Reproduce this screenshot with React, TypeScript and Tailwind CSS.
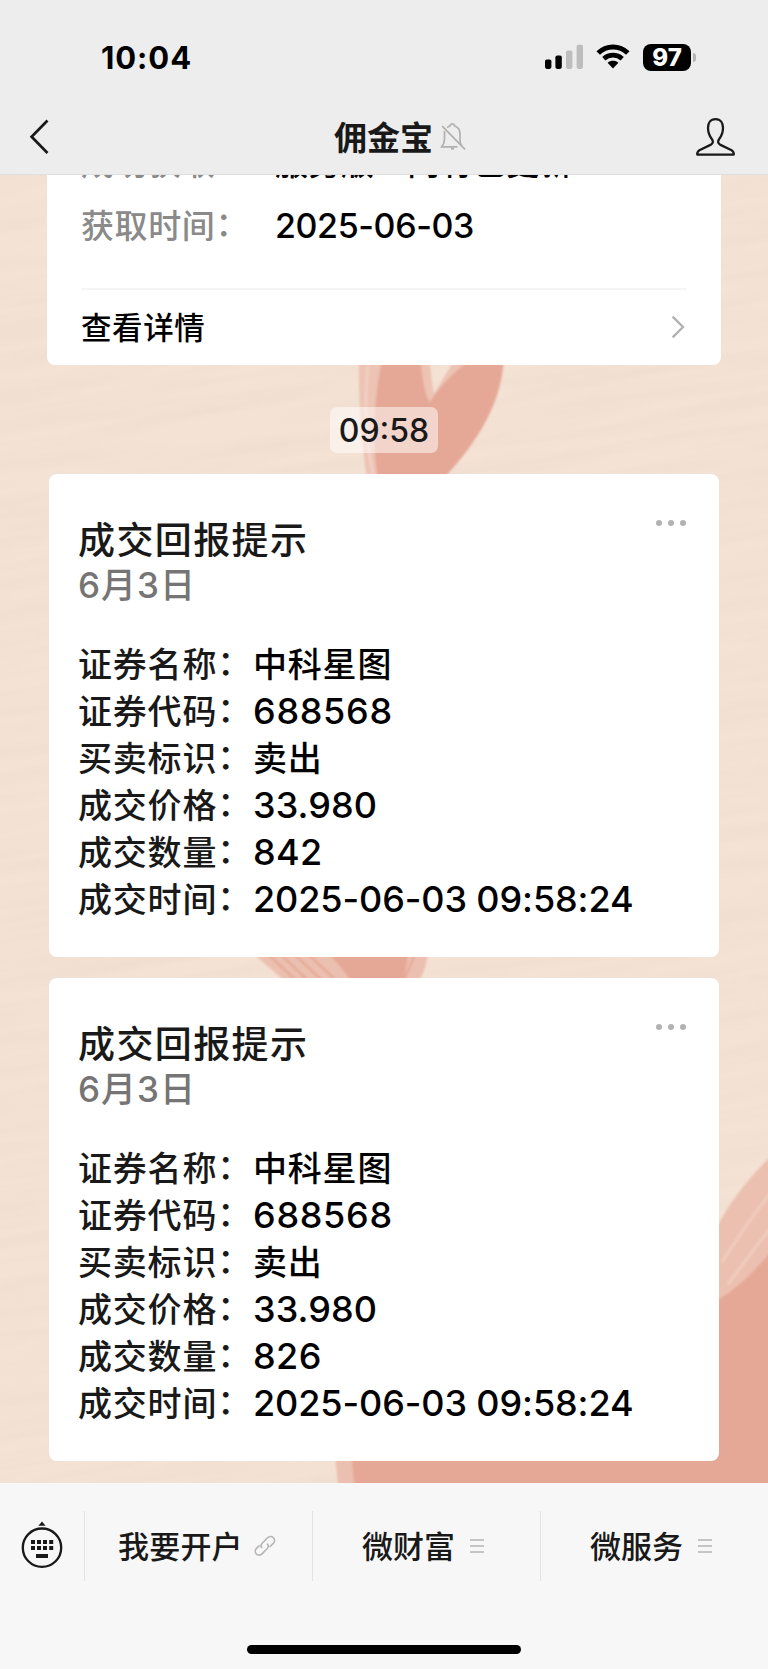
import React from "react";

const CJK = "font-['Inter','Noto_Sans_CJK_SC',sans-serif]";

function Backdrop() {
  return (
    <svg className="absolute inset-0" width="768" height="1669" viewBox="0 0 768 1669" aria-hidden="true">
      <defs>
        <filter id="grain" x="0" y="0" width="100%" height="100%">
          <feTurbulence type="fractalNoise" baseFrequency="0.005 0.07" numOctaves="3" seed="7" />
          <feColorMatrix values="0 0 0 0 0.81  0 0 0 0 0.70  0 0 0 0 0.61  1.3 0 0 0 -0.45" />
        </filter>
        <filter id="soft" x="-10%" y="-10%" width="120%" height="120%">
          <feGaussianBlur stdDeviation="1.3" />
        </filter>
      </defs>
      <rect width="768" height="1669" fill="#f4e2d4" />
      <g transform="rotate(-9 384 834)">
        <rect x="-200" y="-100" width="1200" height="1900" filter="url(#grain)" opacity="0.55" />
      </g>
      <g filter="url(#soft)">
        <path d="M359 340 C358 385 360 430 367 480 L442 480 C480 440 502 400 504 340 L462 340 C455 362 442 380 434 394 C431 380 430 360 428 340 Z" fill="#edc3b3" />
        <path d="M388 340 C376 375 370 430 378 480 L442 480 C480 440 503 400 504 355 L484 352 C458 366 440 385 430 402 C424 395 421 370 419 340 Z" fill="#e5a896" />
        <path d="M368 366 C364 400 366 440 373 474" stroke="#f2d0c4" strokeWidth="3" fill="none" />
        <path d="M250 950 C265 965 278 975 296 990 L412 990 C424 975 428 965 428 945 Z" fill="#ecc0b0" />
        <path d="M320 945 C335 960 346 972 356 990 L402 990 L410 945 Z" fill="#e5a896" />
        <path d="M266 952 L306 990 M278 952 L318 990 M292 952 L332 990 M306 952 L346 990 M416 952 L402 985" stroke="#e5ab9a" strokeWidth="2.5" fill="none" />
        <path d="M780 1148 C735 1188 716 1225 700 1262 L334 1400 C333 1440 336 1470 340 1500 L790 1500 L790 1148 Z" fill="#ecc0b0" />
        <path d="M790 1225 C765 1262 740 1290 700 1310 L350 1400 C350 1440 352 1470 356 1500 L790 1500 Z" fill="#e5a896" />
        <path d="M722 1262 C740 1235 752 1215 772 1192 M728 1284 C748 1258 760 1240 776 1222" stroke="#f0cdbf" strokeWidth="3" fill="none" />
      </g>
    </svg>
  );
}

function StatusBar() {
  return (
    <div className="flex h-[100px] items-center pt-[14px] pl-[101px] text-black">
      <span className="w-[444px] text-[31px] leading-none font-bold tracking-[0.9px]">10:04</span>
      <svg width="38" height="26" viewBox="0 0 38 26">
        <rect x="0" y="15.5" width="6.4" height="9.4" rx="1.8" />
        <rect x="10.4" y="11.5" width="6.4" height="13.4" rx="1.8" />
        <rect x="21" y="6.5" width="6.4" height="18.4" rx="1.8" fill="#bdbdbd" />
        <rect x="31.6" y="0.8" width="6.4" height="24.1" rx="1.8" fill="#bdbdbd" />
      </svg>
      <svg className="ml-[13px]" width="34" height="26" viewBox="0 0 34 26">
        <path d="M2.2 9 C10.5 0.9 23.5 0.9 31.8 9" fill="none" stroke="#000" strokeWidth="5" />
        <path d="M7.8 14.7 C13 9.9 21 9.9 26.2 14.7" fill="none" stroke="#000" strokeWidth="4.6" />
        <path d="M11.6 18.8 C14.8 16.2 19.2 16.2 22.4 18.8 L17 24.6 Z" />
      </svg>
      <div className="ml-[13px] flex h-[27px] w-[48px] items-center justify-center rounded-[8px] bg-black pt-[1px] text-[24px] leading-none font-extrabold text-white">
        97
      </div>
      <span className="ml-[2px] h-[9px] w-[3px] rounded-r-[3px] bg-[#b5b5b5]" />
    </div>
  );
}

function NavBar() {
  return (
    <div className="flex h-[74px] items-center text-[#191919]">
      <svg className="ml-[28px]" width="24" height="40" viewBox="0 0 24 40">
        <path d="M19.5 3.5 L3.6 19.7 L19.5 36" fill="none" stroke="currentColor" strokeWidth="2.7" />
      </svg>
      <div className="ml-[282px] flex w-[362px] items-center">
        <h1 className="pt-[2px] text-[33px] leading-[40px] font-bold">佣金宝</h1>
        <svg className="ml-[6px]" width="28" height="30" viewBox="0 0 28 30" fill="none" stroke="#b0b0b0" strokeWidth="1.7">
          <path d="M5.5 9 V17 C5.5 21 4.5 22.5 2.8 24.8 H18.5 M8.2 5.6 C9.3 4.6 10 4.3 11 4 C11.6 1.2 15 1.2 15.6 4 C19 5 21 8 21 12 V18.5 C21 21 21.5 22.3 22.8 24" />
          <path d="M3.2 4.2 L26 27.4" />
          <path d="M12 26.6 H15" strokeWidth="2" />
        </svg>
      </div>
      <svg width="40" height="40" viewBox="0 0 40 40" fill="none" stroke="currentColor" strokeWidth="2.3" strokeLinejoin="round">
        <path d="M19.5 2.2 C14.4 2.2 12 6 12 10.8 C12 15.8 13 18.4 15.8 22 C17.5 24.2 17.2 26.4 15 27.6 L3.4 33.2 C1.6 34.2 1.2 35 1.2 37.6 H37.8 C37.8 35 37.4 34.2 35.6 33.2 L24 27.6 C21.8 26.4 21.5 24.2 23.2 22 C26 18.4 27 15.8 27 10.8 C27 6 24.6 2.2 19.5 2.2 Z" />
      </svg>
    </div>
  );
}

function Colon() {
  return <span className="relative -top-[2px]">：</span>;
}

function FirstCard() {
  return (
    <section className="mx-[47px] h-[190px] w-[674px] overflow-hidden rounded-b-[8px] bg-white px-[34px]">
      <div className="-mt-[43px] flex h-[63px] items-center text-[33px] leading-[63px] font-medium">
        <span className="w-[194px] tracking-[0.6px] text-[#8a8a8a]">成功获取<Colon /></span>
        <span className="whitespace-nowrap text-black">服务版　内有已更新</span>
      </div>
      <div className="mt-[6px] flex h-[50px] items-center leading-[50px] font-medium">
        <span className="w-[194px] text-[33px] tracking-[0.6px] text-[#8a8a8a]">获取时间<Colon /></span>
        <span className="text-[34px] tracking-[-0.4px] text-black">2025-06-03</span>
      </div>
      <div className="mt-[37px] flex h-[77px] items-center justify-between border-t-2 border-[#f5f5f5]">
        <span className="text-[30.5px] font-medium tracking-[0.6px] text-black">查看详情</span>
        <svg className="mr-[2px] mb-[2px]" width="14" height="24" viewBox="0 0 14 24">
          <path d="M1.6 1.6 L12 12 L1.6 22.4" fill="none" stroke="#b2b2b2" strokeWidth="2.4" />
        </svg>
      </div>
    </section>
  );
}

type Field = { label: string; value: string; style: string };

function TradeCard({ amount }: { amount: string }) {
  const fields: Field[] = [
    { label: "证券名称", value: "中科星图", style: "text-[34px] tracking-[0.8px]" },
    { label: "证券代码", value: "688568", style: "text-[36px] tracking-[0.7px]" },
    { label: "买卖标识", value: "卖出", style: "text-[34px] tracking-[0.8px]" },
    { label: "成交价格", value: "33.980", style: "text-[36px] tracking-[0.1px]" },
    { label: "成交数量", value: amount, style: "text-[36px] tracking-[0.4px]" },
    { label: "成交时间", value: "2025-06-03 09:58:24", style: "text-[36px] tracking-[-0.1px]" },
  ];
  return (
    <section className="mx-[49px] h-[483px] w-[670px] rounded-[8px] bg-white pt-[43px] pl-[29px] text-[#191919]">
      <div className="flex h-[45px] justify-between">
        <h2 className="text-[37px] leading-[47px] font-medium tracking-[1.4px]">成交回报提示</h2>
        <div className="mt-[3px] mr-[33px] flex h-[6px] gap-[6px]">
          <i className="size-[6px] rounded-full bg-[#b2b2b2]" />
          <i className="size-[6px] rounded-full bg-[#b2b2b2]" />
          <i className="size-[6px] rounded-full bg-[#b2b2b2]" />
        </div>
      </div>
      <p className="h-[46px] text-[35px] leading-[46px] font-medium tracking-[1px] text-[#757575]">6月3日</p>
      <dl className="mt-[33px]">
        {fields.map((f) => (
          <div key={f.label} className="flex h-[47px] leading-[47px]">
            <dt className="w-[175px] text-[34px] font-medium tracking-[0.8px] whitespace-nowrap">
              {f.label}
              <Colon />
            </dt>
            <dd className={`font-medium whitespace-nowrap text-black ${f.style}`}>{f.value}</dd>
          </div>
        ))}
      </dl>
    </section>
  );
}

function MenuLines() {
  return (
    <svg width="14" height="16" viewBox="0 0 14 16" stroke="#b5b5b5" strokeWidth="1.7">
      <path d="M0 2 H14 M0 8 H14 M0 14 H14" />
    </svg>
  );
}

function BottomBar() {
  return (
    <footer className="relative h-[186px] bg-[#f7f7f7] pt-[28px] text-[#191919]">
      <div className="flex h-[70px] text-[31px] font-medium">
        <div className="w-[84px] pt-[9px] pl-[21px]">
          <svg width="42" height="50" viewBox="0 0 42 50" fill="currentColor">
            <path d="M17.4 5.8 L21 1.4 L24.6 5.8 Z" />
            <circle cx="21" cy="27.7" r="19.2" fill="none" stroke="currentColor" strokeWidth="2.3" />
            <path d="M10 20h4v4h-4z M16 20h4v4h-4z M22 20h4v4h-4z M28.2 20h4v4h-4z M10 26h4v4h-4z M16 26h4v4h-4z M22 26h4v4h-4z M28.2 26h4v4h-4z M15 34h12v4H15z" />
          </svg>
        </div>
        <div className="flex w-[228px] items-center border-l border-[#e3e3e3] pl-[33px]">
          <span className="w-[136px] pt-[2px] tracking-[0.2px]">我要开户</span>
          <svg width="22" height="22" viewBox="0 0 22 22" fill="none" stroke="#b5b5b5" strokeWidth="1.6">
            <path d="M8.2 13 C6.6 11.4 6.8 9.6 8.4 8 L13.6 2.8 C15.3 1.1 17.8 1.1 19.4 2.7 C21 4.3 21 6.8 19.3 8.4 L15.6 12" />
            <path d="M13.2 8.6 C14.8 10.2 14.6 12.2 13 13.8 L8 18.9 C6.4 20.5 4 20.6 2.4 19 C0.8 17.4 0.9 15 2.5 13.4 L5.6 10.4" />
          </svg>
        </div>
        <div className="flex w-[228px] items-center border-l border-[#e3e3e3] pl-[49px]">
          <span className="w-[108px] pt-[2px]">微财富</span>
          <MenuLines />
        </div>
        <div className="flex w-[228px] items-center border-l border-[#e3e3e3] pl-[49px]">
          <span className="w-[108px] pt-[2px]">微服务</span>
          <MenuLines />
        </div>
      </div>
      <div className="mx-auto mt-[64px] h-[9px] w-[274px] rounded-full bg-black" />
    </footer>
  );
}

export default function App() {
  return (
    <div className={`relative flex h-[1669px] w-[768px] flex-col overflow-hidden ${CJK}`}>
      <Backdrop />
      <header className="relative h-[175px] border-b border-[#dedede] bg-[#ededed]">
        <StatusBar />
        <NavBar />
      </header>
      <main className="relative flex h-[1308px] flex-col">
        <FirstCard />
        <div className="flex h-[109px] justify-center pt-[42px]">
          <time className="flex h-[46px] w-[108px] items-center justify-center rounded-[7px] bg-white/50 pt-[2px] text-[32px] font-medium text-[#191919]">09:58</time>
        </div>
        <div className="flex flex-col gap-[21px]">
          <TradeCard amount="842" />
          <TradeCard amount="826" />
        </div>
      </main>
      <BottomBar />
    </div>
  );
}
